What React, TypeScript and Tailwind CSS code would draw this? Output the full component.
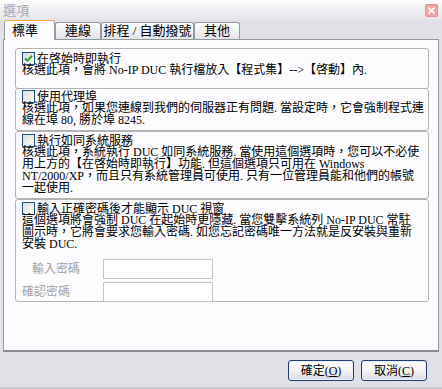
import React from "react";

const font = "font-['Liberation_Serif','Noto_Sans_CJK_TC',serif]";

function CheckBox({ checked }: { checked?: boolean }) {
  return (
    <span className="flex items-center justify-center w-[13px] h-[13px] shrink-0 border border-[#1c5180] bg-gradient-to-br from-[#dcdcd7] to-white">
      {checked && (
        <svg width="9" height="9" viewBox="0 0 9 9">
          <path d="M1 4.2 L3.4 6.6 L8 1.8" fill="none" stroke="#21a121" strokeWidth="2" />
        </svg>
      )}
    </span>
  );
}

function Group({
  title,
  checked,
  lines,
  className,
  children,
}: {
  title: string;
  checked?: boolean;
  lines: string[];
  className: string;
  children?: React.ReactNode;
}) {
  return (
    <div className={`w-[414px] border border-[#b4b4b4] rounded-[3px] pl-[6px] ${className}`}>
      <div className="flex items-center gap-[2px] h-[13px]">
        <CheckBox checked={checked} />
        <span className="leading-[12px] whitespace-nowrap">{title}</span>
      </div>
      <div className="leading-[12px] -mt-[1px]">
        {lines.map((l) => (
          <div key={l} className="whitespace-nowrap">
            {l}
          </div>
        ))}
      </div>
      {children}
    </div>
  );
}

function Tab({ label, active, w }: { label: string; active?: boolean; w: string }) {
  if (active) {
    return (
      <div className={`${w} h-[20px] -mb-px relative z-10 flex flex-col border-x border-[#919b9c] bg-[#fcfcfe] rounded-t-[3px]`}>
        <div className="h-[3px] bg-gradient-to-b from-[#e68b2c] to-[#ffc73c] rounded-t-[3px]" />
        <div className="flex-1 flex items-center pl-[7px] text-[13px]">{label}</div>
      </div>
    );
  }
  return (
    <div className={`${w} h-[17px] flex items-center justify-center border border-b-0 border-[#919b9c] rounded-t-[3px] bg-gradient-to-b from-white to-[#e3e3ea] text-[13px]`}>
      {label}
    </div>
  );
}

function Button({ label, k }: { label: string; k: string }) {
  return (
    <button className="w-[66px] h-[21px] flex items-center justify-center rounded-[3px] border border-[#1f3f6f] bg-gradient-to-b from-white via-[#f4f4f2] to-[#d9dae6] text-[12px] text-black shadow-[inset_0_0_0_1px_#e8eefb]">
      {label}(<span className="underline">{k}</span>)
    </button>
  );
}

export default function App() {
  return (
    <div className={`${font} w-[442px] h-[389px] bg-[#e1e0e6] text-black text-[12px] flex flex-col border-b-2 border-[#c9c8d0]`}>
      {/* Title bar */}
      <div className="h-[20px] shrink-0 flex items-start justify-between pl-[3px] pr-[4px] pt-[3px] bg-gradient-to-b from-[#fdfdfd] to-[#e4e4ea]">
        <span className="text-[13px] leading-[14px] text-[#a5a5ad] font-['Noto_Sans_CJK_TC',sans-serif]">選項</span>
        <span className="w-[13px] h-[13px] mt-[1px] flex items-center justify-center rounded-[2px] border border-[#e58f89] bg-[#eea9a4]">
          <svg width="7" height="7" viewBox="0 0 7 7">
            <path d="M0.5 0.5 L6.5 6.5 M6.5 0.5 L0.5 6.5" stroke="#fff" strokeWidth="1.5" />
          </svg>
        </span>
      </div>

      {/* Tabs */}
      <div className="h-[19px] shrink-0 flex items-end pl-[4px]">
        <Tab label="標準" active w="w-[51px]" />
        <Tab label="連線" w="w-[46px]" />
        <Tab label="排程 / 自動撥號" w="w-[93px]" />
        <Tab label="其他" w="w-[46px]" />
      </div>

      {/* Panel */}
      <div className="ml-[3px] w-[436px] h-[313px] shrink-0 border border-[#919b9c] border-b-2 border-b-[#8a8f94] bg-[#fcfcfe] pl-[11px] pt-[8px] flex flex-col">
        <Group
          className="h-[41px] pt-[3px]"
          checked
          title="在啓始時即執行"
          lines={["核選此項，會將 No-IP DUC 執行檔放入【程式集】-->【啓動】內."]}
        />
        <Group
          className="h-[43px] pt-[1px] -mt-px"
          title="使用代理埠"
          lines={[
            "核選此項，如果您連線到我們的伺服器正有問題. 當設定時，它會強制程式連",
            "線在埠 80, 勝於埠 8245.",
          ]}
        />
        <Group
          className="h-[68px] pt-[2px]"
          title="執行如同系統服務"
          lines={[
            "核選此項，系統執行 DUC 如同系統服務. 當使用這個選項時，您可以不必使",
            "用上方的【在啓始時即執行】功能. 但這個選項只可用在 Windows",
            "NT/2000/XP，而且只有系統管理員可使用. 只有一位管理員能和他們的帳號",
            "一起使用.",
          ]}
        />
        <Group
          className="h-[103px] pt-[2px]"
          title="輸入正確密碼後才能顯示 DUC 視窗"
          lines={[
            "這個選項將會強制 DUC 在起始時更隱藏. 當您雙擊系統列 No-IP DUC 常駐",
            "圖示時，它將會要求您輸入密碼. 如您忘記密碼唯一方法就是反安裝與重新",
            "安裝 DUC.",
          ]}
        >
          <div className="mt-[9px] flex flex-col gap-[3px]">
            <div className="flex items-center h-[20px]">
              <span className="w-[81px] pl-[10px] text-[#a3a3a3]">輸入密碼</span>
              <span className="w-[110px] h-[20px] border border-[#c5c5c5] bg-white" />
            </div>
            <div className="flex items-center h-[20px]">
              <span className="w-[81px] text-[#a3a3a3]">確認密碼</span>
              <span className="w-[110px] h-[20px] border border-[#c5c5c5] bg-white" />
            </div>
          </div>
        </Group>
      </div>

      {/* Buttons */}
      <div className="flex justify-end gap-[7px] pr-[15px] pt-[8px]">
        <Button label="確定" k="O" />
        <Button label="取消" k="C" />
      </div>
    </div>
  );
}
